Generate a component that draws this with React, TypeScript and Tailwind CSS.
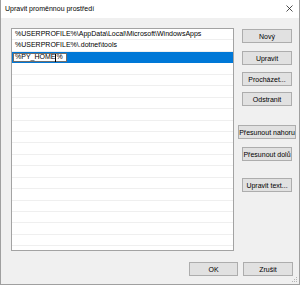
import React from "react";

const paths = [
  "%USERPROFILE%\\AppData\\Local\\Microsoft\\WindowsApps",
  "%USERPROFILE%\\.dotnet\\tools",
];

const Btn = ({
  label,
  className = "",
}: {
  label: string;
  className?: string;
}) => (
  <button
    className={`h-[14px] flex items-center justify-center bg-[#e1e1e1] border border-[#adadad] text-[7px] leading-none text-black ${className}`}
  >
    {label}
  </button>
);

const App = () => {
  const emptyRows = Array.from({ length: 18 });

  return (
    <div
      className="w-[300px] h-[285px] flex flex-col bg-[#f0f0f0] border-l border-r border-b border-[#9f9f9f] overflow-hidden"
      style={{ fontFamily: '"Liberation Sans", Arial, sans-serif' }}
    >
      {/* title bar */}
      <div className="h-[18px] shrink-0 bg-white flex items-center justify-between pl-[4px] pr-[6px]">
        <span className="text-[7px] text-black">Upravit proměnnou prostředí</span>
        <svg width="7" height="7" viewBox="0 0 7 7" className="mb-[1px]">
          <path d="M0.5 0.5 L6.5 6.5 M6.5 0.5 L0.5 6.5" stroke="#222" strokeWidth="0.8" />
        </svg>
      </div>

      <div className="flex-1 flex flex-col pl-[10px] pr-[6px] pt-[10px] relative">
        <div className="flex">
          {/* list */}
          <div className="w-[223px] h-[223px] bg-white border border-[#a3a3a3] overflow-hidden">
            {paths.map((p, i) => (
              <div
                key={i}
                className="h-[11.44px] border-b border-[#efefef] flex items-center pl-[3px] text-[7px] text-black whitespace-nowrap"
              >
                {p}
              </div>
            ))}
            <div className="h-[11.44px] bg-[#0078d7] flex items-center pl-[1px]">
              <div className="h-[9.5px] w-[54px] bg-white border border-[#6d6d6d] flex items-center pl-[1px] text-[7px] text-black whitespace-nowrap">
                %PY_HOME
                <span className="inline-block w-px h-[8px] bg-black" />%
              </div>
            </div>
            {emptyRows.map((_, i) => (
              <div key={i} className="h-[11.44px] border-b border-[#efefef]" />
            ))}
          </div>

          {/* buttons */}
          <div className="w-[50px] ml-[8px] flex flex-col items-center">
            <Btn label="Nový" className="w-[50px] mt-[1px]" />
            <Btn label="Upravit" className="w-[50px] mt-[8px]" />
            <Btn label="Procházet..." className="w-[50px] mt-[7px]" />
            <Btn label="Odstranit" className="w-[50px] mt-[6px]" />
            <Btn label="Přesunout nahoru" className="w-[58px] shrink-0 mt-[19px]" />
            <Btn label="Přesunout dolů" className="w-[50px] mt-[8px] border-[#9a7a78]" />
            <Btn label="Upravit text..." className="w-[50px] mt-[17px]" />
          </div>
        </div>

        <div className="flex justify-end gap-[5px] mt-[11px]">
          <Btn label="OK" className="w-[49px] border-[#0078d7]" />
          <Btn label="Zrušit" className="w-[50px]" />
        </div>

        {/* resize grip */}
        <svg width="6" height="6" viewBox="0 0 6 6" className="absolute right-[1px] bottom-[1px]">
          <rect x="4" y="0" width="1" height="1" fill="#b5b5b5" />
          <rect x="2" y="2" width="1" height="1" fill="#b5b5b5" />
          <rect x="4" y="2" width="1" height="1" fill="#b5b5b5" />
          <rect x="0" y="4" width="1" height="1" fill="#b5b5b5" />
          <rect x="2" y="4" width="1" height="1" fill="#b5b5b5" />
          <rect x="4" y="4" width="1" height="1" fill="#b5b5b5" />
        </svg>
      </div>
    </div>
  );
};

export default App;
